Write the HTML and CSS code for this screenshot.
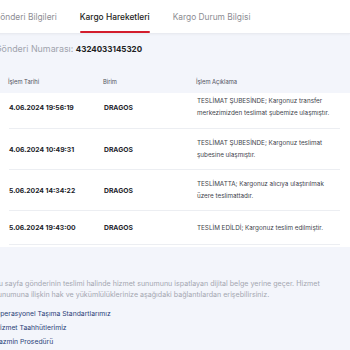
FILE: index.html
```html
<!DOCTYPE html>
<html lang="tr">
<head>
<meta charset="utf-8">
<link rel="stylesheet" href="styles.css">
</head>
<body>
<div class="page">
  <div class="tabs">
    <div class="tab">Gönderi Bilgileri</div>
    <div class="tab active">Kargo Hareketleri</div>
    <div class="tab">Kargo Durum Bilgisi</div>
  </div>
  <div class="content">
    <div class="tracking">Gönderi Numarası: <strong>4324033145320</strong></div>
    <div class="thead">
      <div class="c1">İşlem Tarihi</div>
      <div class="c2">Birim</div>
      <div class="c3">İşlem Açıklama</div>
    </div>
    <div class="tbody">
      <div class="row">
        <div class="c1 date">4.06.2024 19:56:19</div>
        <div class="c2 unit">DRAGOS</div>
        <div class="c3 desc">TESLİMAT ŞUBESİNDE; Kargonuz transfer<br>merkezimizden teslimat şubemize ulaşmıştır.</div>
      </div>
      <div class="row">
        <div class="c1 date">4.06.2024 10:49:31</div>
        <div class="c2 unit">DRAGOS</div>
        <div class="c3 desc">TESLİMAT ŞUBESİNDE; Kargonuz teslimat<br>şubesine ulaşmıştır.</div>
      </div>
      <div class="row">
        <div class="c1 date">5.06.2024 14:34:22</div>
        <div class="c2 unit">DRAGOS</div>
        <div class="c3 desc">TESLİMATTA; Kargonuz alıcıya ulaştırılmak<br>üzere teslimattadır.</div>
      </div>
      <div class="row">
        <div class="c1 date">5.06.2024 19:43:00</div>
        <div class="c2 unit">DRAGOS</div>
        <div class="c3 desc">TESLİM EDİLDİ; Kargonuz teslim edilmiştir.</div>
      </div>
    </div>
    <p class="note">Bu sayfa gönderinin teslimi halinde hizmet sunumunu ispatlayan dijital belge yerine geçer. Hizmet<br>sunumuna ilişkin hak ve yükümlülüklerinize aşağıdaki bağlantılardan erişebilirsiniz.</p>
    <ul class="links">
      <li>Operasyonel Taşıma Standartlarımız</li>
      <li>Hizmet Taahhütlerimiz</li>
      <li>Tazmin Prosedürü</li>
    </ul>
  </div>
</div>
</body>
</html>
```

FILE: styles.css
```css
* { box-sizing: border-box; }
html, body { margin: 0; padding: 0; }
body {
  background: #f3f5fb;
  font-family: Inter, "Noto Sans", sans-serif;
  overflow: hidden;
}
.page { width: 350px; }
.tabs {
  background: #fff;
  height: 34px;
  display: flex;
  gap: 23px;
  margin-left: -6px;
  border-bottom: 1px solid #e9ebf1;
  box-shadow: 0 1px 2px rgba(0,0,0,0.03);
}
.tab {
  font-size: 8.4px;
  color: #8d8d93;
  line-height: 34px;
  white-space: nowrap;
  position: relative;
}
.tab.active {
  color: #1d1d22;
  font-weight: 500;
}
.tab.active::after {
  content: "";
  position: absolute;
  left: 0; right: 0; bottom: 0;
  height: 2px;
  background: #d31c2c;
  border-radius: 1px;
}
.tracking {
  margin: 9px 0 0 -5px;
  font-size: 8.9px;
  color: #a0a3ad;
  line-height: 12px;
  white-space: nowrap;
}
.tracking strong {
  color: #1d1d22;
  font-weight: 700;
  font-size: 8px;
}
.thead {
  display: flex;
  margin-top: 20px;
  padding: 0 8px 0 8px;
  height: 12px;
  align-items: center;
  font-size: 5.8px;
  color: #50525b;
}
.c1 { width: 95px; flex: none; }
.c2 { width: 93px; flex: none; }
.c3 { flex: 1; }
.tbody {
  background: #fff;
  margin-top: 6px;
  padding: 0 10px 2px 9px;
}
.row {
  display: flex;
  align-items: center;
  min-height: 34px;
  padding: 8px 0;
  border-bottom: 1px solid #eceef2;
}
.row:first-child { padding-top: 2px; padding-bottom: 9px; }
.date {
  font-size: 6.8px;
  font-weight: 700;
  color: #22232a;
  white-space: nowrap;
}
.unit {
  font-size: 6.8px;
  font-weight: 700;
  color: #22232a;
}
.desc {
  font-size: 6.3px;
  line-height: 12px;
  color: #42444c;
  white-space: nowrap;
}
.note {
  margin: 31px 0 0 -6px;
  font-size: 7.1px;
  line-height: 11px;
  color: #a3a6b0;
  white-space: nowrap;
}
.links {
  list-style: none;
  margin: 7px 0 0 -5px;
  padding: 0;
  font-size: 6.8px;
  color: #2b3f78;
}
.links li { line-height: 14px; }
```
